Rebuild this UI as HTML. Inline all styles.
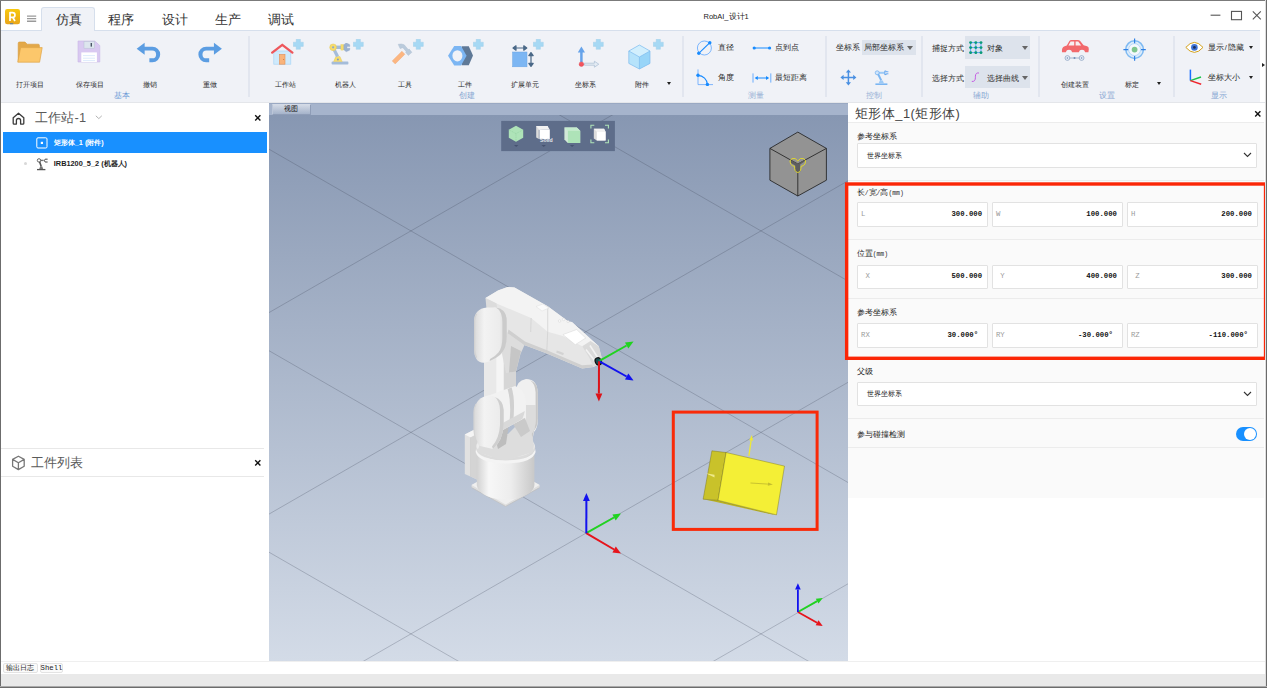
<!DOCTYPE html>
<html lang="zh">
<head>
<meta charset="utf-8">
<title>RobAI_设计1</title>
<style>
*{box-sizing:border-box;margin:0;padding:0}
html,body{width:1267px;height:688px;overflow:hidden;background:#fff}
body{position:relative;font-family:"Liberation Sans",sans-serif;font-size:7.4px;color:#222;line-height:1}
#win{position:absolute;left:0;top:0;width:1267px;height:688px;overflow:hidden;background:#fff}
#win>*{position:absolute}
.serif{font-family:"Liberation Sans",sans-serif}
.mono{font-family:"Liberation Mono",monospace}
/* window borders */
#bl{left:0;top:0;width:1px;height:688px;background:#6c6c6c}
#bt{left:0;top:0;width:1267px;height:1px;background:#7b7b7b}
#br{left:1265px;top:0;width:2px;height:688px;background:linear-gradient(90deg,#dedede 0,#dedede 50%,#6b6b6b 50%)}
#bb{left:0;top:686px;width:1267px;height:2px;background:linear-gradient(#aaa 0,#aaa 50%,#6c6c6c 50%)}
/* title bar */
#title{left:1px;top:1px;width:1264px;height:29px;z-index:3}
#title>*{position:absolute}
.tab{top:12px;height:14px;font-size:12.6px;line-height:14px;color:#333;white-space:nowrap;text-align:center;width:40px}
#tabact{left:41px;top:7px;width:54px;height:24px;z-index:2;background:#f0f2f7;border:1px solid #d6dfec;border-bottom:none;border-radius:3px 3px 0 0}
/* ribbon */
#ribbon{left:1px;top:30px;width:1259px;height:73px;background:#f0f2f7;z-index:1}
#ribbon>*{position:absolute}
.rl{top:49.8px;font-size:7px;height:9px;line-height:9px;width:60px;text-align:center;white-space:nowrap;color:#2a2a2a}
.gl{top:61.9px;height:8px;line-height:8px;width:40px;text-align:center;color:#6b9ad6;white-space:nowrap;font-size:7.5px}
.sep{top:6px;width:2px;height:61px;background:#e2e6ef;margin-left:-1px}
.sl{margin-top:.1px;font-size:7.5px;height:9px;line-height:9px;white-space:nowrap;color:#2a2a2a}
.combo{background:#dde3ec}
.dd{width:0;height:0;margin-top:-.6px;border-left:2.7px solid transparent;border-right:2.7px solid transparent;border-top:3.3px solid #222}
.ddg{width:0;height:0;border-left:3.5px solid transparent;border-right:3.5px solid transparent;border-top:4px solid #666}
/* left panel */
#left{left:1px;top:102px;width:268px;height:559px;background:#fff}
#left>*{position:absolute}
/* viewport */
#vp{left:269px;top:103px;width:579px;height:558px;background:#a6b4cd;overflow:hidden}
#vp>*{position:absolute}
/* right panel */
#right{left:848px;top:102px;width:417px;height:559px;background:#fff}
#right>*{position:absolute}
.lab{font-size:7.5px;height:9px;line-height:9px;white-space:nowrap;color:#222;left:8.7px}
.box{background:#fff;border:1px solid #e2e2e2;border-radius:1px}
.box>*{position:absolute}
.hl{left:0;width:416px;height:1px;background:#ececec}
.k{left:3.4px;top:6.6px;height:9px;line-height:9px;color:#999;font-family:"Liberation Mono",monospace;font-size:7.3px}
.v{right:4.6px;top:6.6px;height:9px;line-height:9px;color:#111;font-family:"Liberation Mono",monospace;font-weight:bold;font-size:7.3px;text-align:right}
/* bottom */
#bot{left:1px;top:661px;width:1264px;height:25px;background:#fff;border-top:1px solid #efefef}
#bot>*{position:absolute}
#status{left:0;top:12px;width:1264px;height:13px;background:#e9e9e9}
.btab{top:.8px;height:9.8px;line-height:8.6px;border:1px solid #e3e3e3;border-radius:2px;background:#fafafa;text-align:center;font-family:"Liberation Mono",monospace;font-size:7.3px;color:#222;white-space:nowrap}
</style>
</head>
<body>
<div id="win">
<div id="title">
<svg style="left:4px;top:8px" width="15" height="16" viewBox="0 0 15 16"><defs><linearGradient id="lg" x1="0" y1="0" x2="0" y2="1"><stop offset="0" stop-color="#f8c80e"/><stop offset="1" stop-color="#e8a51a"/></linearGradient></defs><rect x="0" y="0" width="15" height="15.2" rx="2.2" fill="url(#lg)"/><path d="M5 12V3.6h2.6a2.3 2.3 0 0 1 0 4.7H5M7.7 8.3L10 12" fill="none" stroke="#fff" stroke-width="1.7" stroke-linejoin="round"/><rect x="5" y="14.4" width="3.2" height=".8" fill="#2f6fd0"/></svg>
<svg style="left:26px;top:14px" width="10" height="8" viewBox="0 0 10 8"><path d="M0 1.1h9.2M0 3.6h9.2M0 6.3h9.2" stroke="#9a9a9a" stroke-width="1.4"/></svg>
<div class="tab serif" style="left:47.5px">仿真</div>
<div class="tab serif" style="left:100px">程序</div>
<div class="tab serif" style="left:154px">设计</div>
<div class="tab serif" style="left:206.5px">生产</div>
<div class="tab serif" style="left:260px">调试</div>
<div style="left:702.5px;top:11px;height:10px;line-height:10px;font-size:7.5px;color:#222;white-space:nowrap">RobAI_设计1</div>
<svg style="left:1207.9px;top:8.3px" width="56" height="14" viewBox="0 0 56 14"><path d="M1.6 6.2h9.8" stroke="#555" stroke-width="1.1"/><rect x="22.5" y="2.4" width="10" height="8.3" fill="none" stroke="#555" stroke-width="1.1"/><path d="M43.8 2.3l8 8M51.8 2.3l-8 8" stroke="#555" stroke-width="1.1"/></svg>
</div>
<div id="tabact"></div>
<div id="ribbon"><div style="left:0;top:0;width:1259px;height:1px;background:#d6dfec"></div><div style="left:0;top:72px;width:1264px;height:1px;background:#e4e6ea"></div>
<svg style="left:16px;top:11px" width="26" height="22" viewBox="0 0 26 22"><path d="M1.2 21V2.2q0-1.2 1.2-1.2h5.6l2.2 2.2h11q1.2 0 1.2 1.2V8" fill="#e3a848" stroke="#d79a3a" stroke-width=".6"/><path d="M3.6 6.6h21.6l-2.6 14.6H.8z" fill="#fcc76b" stroke="#e0a548" stroke-width=".7" stroke-linejoin="round"/></svg>
<svg style="left:76px;top:10.399999999999999px" width="24" height="23" viewBox="0 0 24 23"><path d="M1 1h16.8l5 4.6V22H1z" fill="#d9c9f1" stroke="#c9b7e6" stroke-width=".6"/><rect x="7" y="1.6" width="10.5" height="6.6" fill="#dde5ee" stroke="#b9c4d2" stroke-width=".5"/><rect x="13.6" y="3" width="1.4" height="3.6" fill="#4a5666"/><rect x="4.3" y="12.4" width="15.6" height="9.6" fill="#fff"/><path d="M6 15.6h12M6 18.2h12M6 20.6h12" stroke="#cfe2fa" stroke-width=".7"/></svg>
<svg style="left:135.4px;top:12.2px" width="27" height="21.6" viewBox="0 0 25 20"><path d="M0.6 6.2L8 .6v3.7h7.2a7 7 0 0 1 0 14.4H12.4v-3.6h2.6a3.6 3.6 0 0 0 0-7.2H8v3.9z" fill="#5b9de2"/></svg>
<svg style="left:195px;top:12px" width="27" height="21.6" viewBox="0 0 25 20"><g transform="translate(24.6 0) scale(-1 1)"><path d="M0.6 6.2L8 .6v3.7h7.2a7 7 0 0 1 0 14.4H12.4v-3.6h2.6a3.6 3.6 0 0 0 0-7.2H8v3.9z" fill="#5b9de2"/></g></svg>
<div class="rl" style="left:-1.0px;width:60px">打开项目</div>
<div class="rl" style="left:59.0px;width:60px">保存项目</div>
<div class="rl" style="left:119.0px;width:60px">撤销</div>
<div class="rl" style="left:179.0px;width:60px">重做</div>
<div class="gl" style="left:101.3px;color:#6b9ad6">基本</div>
<div class="sep" style="left:248px"></div>
<svg style="left:270px;top:12.5px" width="23" height="22" viewBox="0 0 23 22"><rect x="2.8" y="8" width="17" height="13.2" fill="#cfeafc" stroke="#a9d6f6" stroke-width=".7"/><rect x="8.4" y="11.4" width="5.6" height="9.8" fill="#f9b47c" stroke="#e28f56" stroke-width=".6"/><circle cx="12.6" cy="16.6" r=".5" fill="#c96e3a"/><path d="M1.2 9.6L11.3 1.8l10.1 7.8" fill="none" stroke="#ee575c" stroke-width="2.3" stroke-linecap="round" stroke-linejoin="round"/></svg>
<svg style="left:292.0px;top:8.600000000000001px" width="11" height="11" viewBox="0 0 11 11"><path d="M3.2.3h4.2v2.9h2.9v4.2H7.4v2.9H3.2V7.4H.3V3.2h2.9z" fill="#a6d9f4" stroke="#9acbe9" stroke-width=".4"/></svg>
<svg style="left:327.5px;top:12.5px" width="23" height="22" viewBox="0 0 23 22"><rect x="2.6" y="18.6" width="16.8" height="2.9" rx=".8" fill="#a4bcd9"/><path d="M4.6 18.6l2.2-5h4.2l2.2 5z" fill="#f6dc6c" stroke="#e3c650" stroke-width=".4"/><circle cx="8.9" cy="16.4" r="1" fill="#7f9cc4"/><path d="M8.6 13.4L5 6.4" stroke="#a4bcd9" stroke-width="3.2"/><path d="M6 4.3h6.6" stroke="#a4bcd9" stroke-width="3.4"/><rect x="11.9" y="1.5" width="2.9" height="5.6" fill="#f6dc6c" stroke="#e3c650" stroke-width=".3"/><circle cx="4.1" cy="4.3" r="3.4" fill="#f6dc6c" stroke="#e3c650" stroke-width=".4"/><circle cx="4.1" cy="4.3" r="1.1" fill="#8fa9cc"/><path d="M14.8 1.8l2.4-2 3.4 1.6.4 2h-3v1.800000000000002h3l-.4 2-3.4 1.6-2.400000000000002-2z" fill="#9ab1d0" stroke="#8aa2c4" stroke-width=".3"/></svg>
<svg style="left:352.0px;top:8.600000000000001px" width="11" height="11" viewBox="0 0 11 11"><path d="M3.2.3h4.2v2.9h2.9v4.2H7.4v2.9H3.2V7.4H.3V3.2h2.9z" fill="#a6d9f4" stroke="#9acbe9" stroke-width=".4"/></svg>
<svg style="left:389.5px;top:13px" width="24" height="22" viewBox="0 0 24 22"><path d="M1.2 17.9L10.9 8.2l3 3L4.2 20.900000000000002z" fill="#fcb681" stroke="#eca777" stroke-width=".4"/><path d="M7.2 1.3q3.4-.9 6 .5l4 4.7 1-.4 2.700000000000003 3.200000000000001-3.600000000000001 3.200000000000001-2.700000000000003-3.200000000000001.5-.9-3.2-3.700000000000001-2.8.9z" fill="#bacbdc" stroke="#a8bbd0" stroke-width=".4"/></svg>
<svg style="left:412.0px;top:8.799999999999997px" width="11" height="11" viewBox="0 0 11 11"><path d="M3.2.3h4.2v2.9h2.9v4.2H7.4v2.9H3.2V7.4H.3V3.2h2.9z" fill="#a6d9f4" stroke="#9acbe9" stroke-width=".4"/></svg>
<svg style="left:445.5px;top:15px" width="27" height="22" viewBox="0 0 27 22"><path d="M14.6 1.2h7.2l4.2 9.4-4.2 9.6h-7.2z" fill="#5f7997"/><path d="M7.2 1L1 10.8l6.2 9.8h6.8l5.6-9.8L14 1z" fill="#7cb6f3"/><ellipse cx="10.4" cy="10.8" rx="5" ry="5.6" fill="#f0f2f7"/></svg>
<svg style="left:472.0px;top:8.600000000000001px" width="11" height="11" viewBox="0 0 11 11"><path d="M3.2.3h4.2v2.9h2.9v4.2H7.4v2.9H3.2V7.4H.3V3.2h2.9z" fill="#a6d9f4" stroke="#9acbe9" stroke-width=".4"/></svg>
<svg style="left:510.5px;top:14.5px" width="23" height="23" viewBox="0 0 23 23"><rect x=".6" y="7" width="14.4" height="14.8" fill="#7cb6f3" stroke="#6aa4e4" stroke-width=".5"/><path d="M1.6 3h12.4M1 3l3-2.2v4.4zM14.8 3l-3-2.2v4.4z" stroke="#4b6988" stroke-width="1.2" fill="#4b6988" stroke-linejoin="round"/><path d="M19 8.6v11.6M19 7.6l-2.2 3h4.4zM19 21.4l-2.2-3h4.4z" stroke="#4b6988" stroke-width="1.2" fill="#4b6988" stroke-linejoin="round"/></svg>
<svg style="left:532.0px;top:8.600000000000001px" width="11" height="11" viewBox="0 0 11 11"><path d="M3.2.3h4.2v2.9h2.9v4.2H7.4v2.9H3.2V7.4H.3V3.2h2.9z" fill="#a6d9f4" stroke="#9acbe9" stroke-width=".4"/></svg>
<svg style="left:575.5px;top:15.5px" width="23" height="22" viewBox="0 0 23 22"><path d="M7.4 17.2h10v-2l4.4 3-4.4 3v-2h-10z" fill="#e4ecf4" stroke="#a9bdd2" stroke-width=".7" stroke-linejoin="round"/><path d="M4.4 16V6" stroke="#66a3ea" stroke-width="2.5"/><path d="M4.4 .6L.8 6.6h7.2z" fill="#66a3ea"/><circle cx="4.4" cy="18.2" r="2.3" fill="#f2545e" stroke="#d93c48" stroke-width=".4"/></svg>
<svg style="left:591.5px;top:8.600000000000001px" width="11" height="11" viewBox="0 0 11 11"><path d="M3.2.3h4.2v2.9h2.9v4.2H7.4v2.9H3.2V7.4H.3V3.2h2.9z" fill="#a6d9f4" stroke="#9acbe9" stroke-width=".4"/></svg>
<svg style="left:626.5px;top:14px" width="24" height="26" viewBox="0 0 24 26"><path d="M11.4 1L22 7v12.4L11.4 25 .8 19.4V7z" fill="#b6e3fb"/><path d="M11.4 1L22 7l-10.6 6L.8 7z" fill="#d2effd"/><path d="M22 7v12.4L11.4 25V13z" fill="#98d5f8"/><path d="M11.4 1L22 7v12.4L11.4 25 .8 19.4V7zM.8 7l10.6 6L22 7M11.4 13v12" fill="none" stroke="#7fbcee" stroke-width=".7" stroke-linejoin="round"/></svg>
<svg style="left:651.5px;top:8.600000000000001px" width="11" height="11" viewBox="0 0 11 11"><path d="M3.2.3h4.2v2.9h2.9v4.2H7.4v2.9H3.2V7.4H.3V3.2h2.9z" fill="#a6d9f4" stroke="#9acbe9" stroke-width=".4"/></svg>
<div class="rl" style="left:254.0px;width:60px">工作站</div>
<div class="rl" style="left:314.0px;width:60px">机器人</div>
<div class="rl" style="left:374.0px;width:60px">工具</div>
<div class="rl" style="left:434.0px;width:60px">工件</div>
<div class="rl" style="left:494.0px;width:60px">扩展单元</div>
<div class="rl" style="left:554.0px;width:60px">坐标系</div>
<div class="rl" style="left:610.7px;width:60px">附件</div>
<div class="gl" style="left:445.7px;color:#86a6d2">创建</div>
<div class="sep" style="left:682px"></div>
<div class="dd" style="left:666px;top:52.599999999999994px"></div>
<svg style="left:694px;top:9.5px" width="19" height="16" viewBox="0 0 19 16"><circle cx="9.4" cy="8" r="7" fill="none" stroke="#4a9cff" stroke-width=".7"/><path d="M4 13.2L14.6 2.8" stroke="#178bff" stroke-width="1.1"/><circle cx="3.8" cy="13.3" r="1.7" fill="#178bff"/><circle cx="14.8" cy="2.7" r="1.7" fill="#178bff"/></svg>
<svg style="left:694px;top:39px" width="19" height="17" viewBox="0 0 19 17"><path d="M3 .4v15.2h15" fill="none" stroke="#4a9cff" stroke-width=".7"/><path d="M3 6.4a9.4 9.4 0 0 1 9.4 9.2" fill="none" stroke="#178bff" stroke-width="1.1"/><circle cx="3" cy="6.3" r="1.7" fill="#178bff"/><circle cx="12.4" cy="15.4" r="1.7" fill="#178bff"/></svg>
<svg style="left:751px;top:14.5px" width="20" height="6" viewBox="0 0 20 6"><path d="M2 3h16" stroke="#178bff" stroke-width="1"/><circle cx="2.2" cy="3" r="1.6" fill="#178bff"/><circle cx="17.6" cy="3" r="1.6" fill="#178bff"/></svg>
<svg style="left:751px;top:42.5px" width="20" height="10" viewBox="0 0 20 10"><path d="M1 .4v9.2M18.8 .4v9.2" stroke="#4a9cff" stroke-width=".8"/><path d="M4 5h12" stroke="#178bff" stroke-width="1"/><path d="M2.6 5l3.2-2v4zM17.2 5l-3.2-2v4z" fill="#178bff"/></svg>
<div class="sl" style="left:717.3px;top:13.299999999999997px">直径</div>
<div class="sl" style="left:717.3px;top:43.3px">角度</div>
<div class="sl" style="left:774px;top:13.299999999999997px">点到点</div>
<div class="sl" style="left:774px;top:43.3px">最短距离</div>
<div class="gl" style="left:734.7px;color:#9ab3d6">测量</div>
<div class="sep" style="left:825px"></div>
<div class="sl" style="left:835.3px;top:13.299999999999997px">坐标系</div>
<div class="combo" style="left:860.8px;top:10.299999999999997px;width:54px;height:14.6px"></div>
<div class="sl" style="left:863px;top:13.299999999999997px">局部坐标系</div>
<div class="ddg" style="left:906px;top:16px"></div>
<svg style="left:838.5px;top:38.5px" width="17" height="17" viewBox="0 0 17 17"><path d="M8.4 2.4v12M2.4 8.4h12" stroke="#4a90e2" stroke-width="1.5"/><path d="M8.4 .4L5.8 3.6h5.2zM8.4 16.4l-2.6-3.2h5.2zM.4 8.4l3.2-2.6v5.2zM16.4 8.4l-3.2-2.6v5.2z" fill="#4a90e2"/></svg>
<svg style="left:872.5px;top:39.5px" width="15" height="16" viewBox="0 0 15 16"><path d="M1.4 14.2h12" stroke="#7bb6f2" stroke-width="1.6"/><path d="M4.6 13.4l1.2-3h3l1.2 3z" fill="#9dcaf6"/><path d="M7.2 10.4L3.6 3" stroke="#7bb6f2" stroke-width="2"/><path d="M3.4 2.8h7.4" stroke="#9dcaf6" stroke-width="2"/><circle cx="3.2" cy="2.8" r="2" fill="#cfe5fb" stroke="#5aa2ee" stroke-width=".6"/><path d="M10.6 1h1.6v.8h2.2M10.6 4.6h1.6v-.8h2.2M10.9 1v3.6" fill="none" stroke="#5aa2ee" stroke-width=".9"/></svg>
<div class="gl" style="left:853.4px;color:#9ab3d6">控制</div>
<div class="sep" style="left:921px"></div>
<div class="sl" style="left:931.4px;top:13.5px">捕捉方式</div>
<div class="sl" style="left:931.4px;top:43.5px">选择方式</div>
<div class="combo" style="left:964px;top:6.399999999999999px;width:65.2px;height:22.2px"></div>
<div class="combo" style="left:964px;top:35.900000000000006px;width:65.2px;height:22.4px"></div>
<svg style="left:967.7px;top:10.700000000000003px" width="14" height="13.4" viewBox="0 0 14 13.4"><path d="M1.6 1.6h10.4M1.6 6.6h10.4M1.6 11.6h10.4M1.6 1.6v10M6.8 1.6v10M12 1.6v10" stroke="#2b8cff" stroke-width=".7"/><circle cx="1.6" cy="1.6" r="1.45" fill="#0a9b78"/><circle cx="1.6" cy="6.6" r="1.45" fill="#0a9b78"/><circle cx="1.6" cy="11.6" r="1.45" fill="#0a9b78"/><circle cx="6.8" cy="1.6" r="1.45" fill="#0a9b78"/><circle cx="6.8" cy="6.6" r="1.45" fill="#0a9b78"/><circle cx="6.8" cy="11.6" r="1.45" fill="#0a9b78"/><circle cx="12" cy="1.6" r="1.45" fill="#0a9b78"/><circle cx="12" cy="6.6" r="1.45" fill="#0a9b78"/><circle cx="12" cy="11.6" r="1.45" fill="#0a9b78"/></svg>
<svg style="left:970px;top:42px" width="9" height="10.4" viewBox="0 0 9 10.4"><path d="M.8 9.4q3.4.6 3.6-3.6v-1.6Q4.6.4 8 1" fill="none" stroke="#c45ae2" stroke-width="1"/></svg>
<div class="sl" style="left:985.8px;top:13.5px">对象</div>
<div class="sl" style="left:985.8px;top:43.5px">选择曲线</div>
<div class="ddg" style="left:1020.8px;top:16px"></div>
<div class="ddg" style="left:1020.8px;top:46px"></div>
<div class="gl" style="left:959.7px;color:#86a6d2">辅助</div>
<div class="sep" style="left:1038px"></div>
<svg style="left:1059.5px;top:9.200000000000003px" width="29" height="23" viewBox="0 0 29 23"><path d="M1 13.2q-.6-5 2.6-6l2.2-.6L8.4 2q.6-1 2-1h6.4q1.4 0 2.4 1l3.4 4.2 3.6 1q2 .6 1.6 3.4l-.4 2.6h-3.2a3.3 3.3 0 0 0-6.4 0h-6.6a3.3 3.3 0 0 0-6.4 0z" fill="#f2696c"/><path d="M9.6 2.6h3.6v3.8H7.4zM14.6 2.6h2.6l3 3.8h-5.6z" fill="#f7f0f2"/><circle cx="6.4" cy="19" r="2.4" fill="#e8eef6" stroke="#8fa6c4" stroke-width=".8"/><circle cx="20.6" cy="19" r="2.4" fill="#e8eef6" stroke="#8fa6c4" stroke-width=".8"/><path d="M8.8 19h9.4" stroke="#8fa6c4" stroke-width=".8"/><circle cx="13.5" cy="19" r="1" fill="#6f8db6"/><circle cx="6.4" cy="19" r=".8" fill="#6f8db6"/><circle cx="20.6" cy="19" r=".8" fill="#6f8db6"/></svg>
<svg style="left:1122px;top:8px" width="23" height="23" viewBox="0 0 23 23"><circle cx="11.6" cy="11.6" r="8.8" fill="#dcecfb" stroke="#7fbaf2" stroke-width="1.5"/><circle cx="11.6" cy="11.6" r="6" fill="#f4f8fd" stroke="#a9d0f6" stroke-width=".8"/><circle cx="11.6" cy="11.6" r="2.9" fill="#7fc68f"/><path d="M11.6 .4v4.8M11.6 18v4.8M.4 11.6h4.8M18 11.6h4.8" stroke="#2f80e4" stroke-width="1.2"/></svg>
<div class="rl" style="left:1043.7px;width:60px">创建装置</div>
<div class="rl" style="left:1101.0px;width:60px">标定</div>
<div class="gl" style="left:1086.2px;color:#86a6d2">设置</div>
<div class="sep" style="left:1173px"></div>
<div class="dd" style="left:1156px;top:52.599999999999994px"></div>
<svg style="left:1184px;top:11px" width="19" height="13" viewBox="0 0 19 13"><path d="M.8 6.4Q9.4-3.6 18 6.4 9.4 16.400000000000002.8 6.4z" fill="#fff" stroke="#d2a11c" stroke-width="1"/><circle cx="9.4" cy="6.4" r="3.3" fill="#3f74d6"/><circle cx="9.4" cy="6.4" r="1.4" fill="#1c2f5c"/></svg>
<svg style="left:1186.5px;top:39px" width="15" height="17" viewBox="0 0 15 17"><path d="M2.4 11.6V.6" stroke="#1a6fff" stroke-width="1.5"/><path d="M2.4 11.6l10.6-3.6" stroke="#19c24a" stroke-width="1.5"/><path d="M2.4 11.6l10.8 3.6" stroke="#f0262f" stroke-width="1.5"/></svg>
<div class="sl" style="left:1207px;top:13.299999999999997px">显示<span style="padding:0 .8px">/</span>隐藏</div>
<div class="sl" style="left:1207px;top:43.3px">坐标大小</div>
<div class="gl" style="left:1198.2px;color:#86a6d2">显示</div>
<div class="dd" style="left:1248px;top:16.6px"></div>
<div class="dd" style="left:1248px;top:46.599999999999994px"></div></div>
<div style="left:1261.5px;top:63.2px;width:0;height:0;border-top:2.4px solid transparent;border-bottom:2.4px solid transparent;border-left:3px solid #222"></div>
<div id="left">
<svg style="left:11.4px;top:10px" width="13" height="13" viewBox="0 0 13 13"><path d="M1.2 5.8L6.5 1.2l5.3 4.6v5.4q0 .9-.9.9H8.6V8.4q0-1.9-2.1-1.9T4.4 8.4v3.7H2.1q-.9 0-.9-.9z" fill="none" stroke="#3a3a3a" stroke-width="1.3" stroke-linejoin="round"/></svg>
<div class="serif" style="left:33.6px;top:9px;height:14px;line-height:14px;font-size:12.8px;color:#5a5a5a;white-space:nowrap;letter-spacing:.3px">工作站-1</div>
<svg style="left:93.5px;top:13.4px" width="8" height="5" viewBox="0 0 8 5"><path d="M.8.8l3 2.8 3-2.8" fill="none" stroke="#aaa" stroke-width=".9"/></svg>
<svg style="left:253.2px;top:12.4px" width="8" height="8" viewBox="0 0 8 8"><path d="M1.2 1.2l5.2 5.2M6.4 1.2L1.2 6.4" stroke="#111" stroke-width="1.4"/></svg>
<div style="left:2px;top:30.4px;width:263.6px;height:20.6px;background:#1890ff"></div>
<svg style="left:35.4px;top:35.2px" width="12" height="12" viewBox="0 0 12 12"><rect x=".8" y=".8" width="10.2" height="10.2" rx="1.2" fill="none" stroke="#fff" stroke-width="1"/><rect x="4.8" y="4.8" width="2.2" height="2.2" fill="#fff"/></svg>
<div style="left:52.8px;top:36.4px;height:10px;line-height:10px;font-size:7.3px;font-weight:bold;color:#fff;white-space:nowrap">矩形体_1 (附件)</div>
<div style="left:23px;top:60.4px;width:3px;height:3px;border-radius:2px;background:#d8d8d8"></div>
<svg style="left:35.4px;top:56.2px" width="13" height="13" viewBox="0 0 13 13"><path d="M1 11.6h8.4" stroke="#555" stroke-width="1.3"/><path d="M3.2 11l.9-2.6h2.2l.9 2.6z" fill="#777"/><path d="M5.2 8.6L3.2 2.6" stroke="#555" stroke-width="1.6"/><path d="M3 2.4h4.6" stroke="#777" stroke-width="1.4"/><circle cx="3" cy="2.4" r="1.7" fill="#fff" stroke="#444" stroke-width=".8"/><path d="M11.6 1.2Q8.400000000000002.4 8.4 2.6T11.6 4" fill="none" stroke="#444" stroke-width="1"/></svg>
<div style="left:52.8px;top:57.4px;height:10px;line-height:10px;font-size:7.35px;font-weight:bold;color:#1c1c1c;white-space:nowrap">IRB1200_5_2 (机器人)</div>
<div style="left:0;top:346px;width:263px;height:1px;background:#e8e8e8"></div>
<div style="left:0;top:374px;width:263px;height:1px;background:#e8e8e8"></div>
<svg style="left:10px;top:353.4px" width="15" height="16" viewBox="0 0 15 16"><path d="M7.4 1.2l5.8 3.2v6.8l-5.8 3.4-5.8-3.4V4.400000000000002zM1.6 4.4l5.8 3.3 5.8-3.3M7.4 7.700000000000002v6.9" fill="none" stroke="#777" stroke-width="1.3" stroke-linejoin="round"/></svg>
<div class="serif" style="left:29.8px;top:354px;height:14px;line-height:14px;font-size:12.8px;color:#5a5a5a;white-space:nowrap">工件列表</div>
<svg style="left:253.2px;top:357px" width="8" height="8" viewBox="0 0 8 8"><path d="M1.2 1.2l5.2 5.2M6.4 1.2L1.2 6.4" stroke="#111" stroke-width="1.4"/></svg>
</div>
<div id="vp"><svg style="left:0;top:0" width="579" height="558" viewBox="269 103 579 558"><defs>
<linearGradient id="bg" x1="0" y1="115" x2="0" y2="661" gradientUnits="userSpaceOnUse"><stop offset="0" stop-color="#8797b2"/><stop offset="1" stop-color="#d3dbe7"/></linearGradient>
<linearGradient id="cyl" x1="476" y1="0" x2="534" y2="0" gradientUnits="userSpaceOnUse"><stop offset="0" stop-color="#cfcfcf"/><stop offset=".22" stop-color="#f7f7f7"/><stop offset=".6" stop-color="#ededed"/><stop offset="1" stop-color="#c9c9c9"/></linearGradient>
<linearGradient id="cap" x1="474" y1="0" x2="508" y2="0" gradientUnits="userSpaceOnUse"><stop offset="0" stop-color="#d9d9d9"/><stop offset=".3" stop-color="#f3f3f3"/><stop offset=".75" stop-color="#ececec"/><stop offset="1" stop-color="#d2d2d2"/></linearGradient>
<linearGradient id="larm" x1="483" y1="0" x2="516" y2="0" gradientUnits="userSpaceOnUse"><stop offset="0" stop-color="#dedede"/><stop offset=".4" stop-color="#f0f0f0"/><stop offset=".62" stop-color="#e4e4e4"/><stop offset="1" stop-color="#cccccc"/></linearGradient>
<clipPath id="vpc"><rect x="269" y="115" width="579" height="546"/></clipPath>
</defs>
<rect x="269" y="103" width="579" height="12" fill="#a6b4cc"/><rect x="269" y="103" width="579" height="1" fill="#9aa9c3"/>
<rect x="269" y="115" width="579" height="546" fill="url(#bg)"/>
<path d="M269 -52.3L848 281.0M269 149.2L848 482.5M269 350.7L848 684.0M269 552.2L848 885.5M269 312.6L848 -20.7M269 514.1L848 180.8M269 715.6L848 382.3M269 917.1L848 583.8" stroke="#3f4858" stroke-opacity=".36" stroke-width=".75" fill="none" clip-path="url(#vpc)"/>
<rect x="501.2" y="120.9" width="113.7" height="30.2" fill="#5e6d8a"/>
<path d="M516 125.8l7.2 4v8l-7.2 4-7.2-4v-8z" fill="#aee3b8"/><path d="M508.8 129.8l7.2 3.8 7.2-3.8M516 133.600000000000002v8" stroke="#8fcf9e" stroke-width=".6" stroke-dasharray="1 .8" fill="none"/><path d="M514.0 144.9h4.4l-2.2 2z" fill="#465370"/>
<path d="M536.2 126h11.6v1.600000000000002l-9 2.4v9l-2.6-1.4z" fill="#dcdcdc"/><path d="M536.2 126h11.4l2.2 3.7h-10.4z" fill="#f2f2f2"/><rect x="539.4" y="129.7" width="10.4" height="9.4" fill="#fff"/><path d="M541.5 144.9h4.4l-2.2 2z" fill="#465370"/>
<text x="540" y="142" font-family="Liberation Sans, sans-serif" font-size="5.2" font-weight="bold" fill="#e6e9ee">Solid</text>
<path d="M564.4 127.4h12.4l3.4 3.4v12.2h-12.400000000000002l-3.4-3.4z" fill="#d2e9d8"/><path d="M564.4 127.4h12.4l3.4 3.4h-12.4z" fill="#c4ecce"/><rect x="567.9" y="130.8" width="12.3" height="12.2" fill="#aee3b8"/><path d="M569.9 144.9h4.4l-2.2 2z" fill="#465370"/>
<path d="M593.8 128.7h10.4l1.4 3v8.800000000000001h-8.8l-3-2z" fill="#dcdcdc"/><path d="M593.8 128.7h10.2l1.6 3h-8.8z" fill="#f2f2f2"/><rect x="596.8" y="131.7" width="8.8" height="8.8" fill="#fff"/>
<path d="M590.9 128.6v-3.400000000000002h3.4M605 125.2h3.4v3.4M608.4 139.6v3.2h-3.4M594.3 142.8h-3.4v-3.2" fill="none" stroke="#aee3b8" stroke-width="1.1"/>
<path d="M797.8 132.1l28.6 16.3v31.8l-28.6 15.8-27.9-15.8v-31.8z" fill="#939393" stroke="#1a1a1a" stroke-width=".8" stroke-linejoin="round"/><path d="M769.9 148.4l27.9 15.6 28.6-15.6M797.8 164v32" fill="none" stroke="#1a1a1a" stroke-width=".8"/>
<path d="M791.4 160.2l6.3 3.6 6-3.4.9 1.2-4.4 2.800000000000001v7.4l-2.4.8-2.6-1.400000000000002v-5.800000000000001l-4.6-2.6z" fill="#5e5e5e"/><path d="M797.8 161q-2.200000000000003-3.600000000000001-6-2.400000000000002-3 2-1.200000000000003 5.4 1.800000000000001 2.200000000000003 4 2.400000000000002-.4 5.2 3.200000000000003 6.2 3.6-1 3.200000000000003-6.2 2.200000000000003-.2 4-2.400000000000002 1.800000000000001-3.4-1.200000000000003-5.4-3.8-1.200000000000001-6 2.400000000000002z" fill="none" stroke="#e8de22" stroke-width=".9"/>
<!--ROBOT_START--><path d="M471.6 485l34-19 34 19v2.6l-34 18.8-34-18.8z" fill="#dedede"/><path d="M471.6 485l34-19 34 19-34 19.4z" fill="#efefef"/><path d="M471.6 487.6l34 18.8 34-18.8" fill="none" stroke="#bdbdbd" stroke-width=".7"/><path d="M464.8 434.6l9.8-5.2 6 2.6v47l-2.4 1-13.4-6z" fill="#e1e1e1"/><path d="M464.8 434.6l9.8-5.2 6 2.6-10 5.4z" fill="#f5f5f5"/><path d="M470.6 437.4v39.4" stroke="#c9c9c9" stroke-width=".8"/><path d="M470.6 437.4l10-5.4v47l-2.4 1-7.6-3.400000000000002z" fill="#d4d4d4"/><path d="M476.8 446v39.6a28.8 15 0 0 0 57.6-2.2V446z" fill="url(#cyl)"/><ellipse cx="505.6" cy="448" rx="29.6" ry="12.6" fill="#dcdcdc"/><ellipse cx="505.6" cy="446" rx="29.2" ry="12" fill="#ececec"/><path d="M516 392q0-11.5 10-13 11.8 0 11.8 15v26q0 8-3.800000000000001 12l-2.6 12-15.4 6z" fill="#f0f0f0"/><path d="M526 405h9.6v15q0 8-3 12l-2.6 11-4 2z" fill="#dcdcdc"/><path d="M530 380.2q5 3 5.6 12v28q0 8-3.6 13l-2 10 1.4-.6 2.6-12q3.800000000000001-4 3.800000000000001-12v-26q0-10-7.800000000000001-12.4z" fill="#c8c8c8"/><path d="M484 348h32v44l-14 9-18-3z" fill="#e9e9e9"/><path d="M503.6 350h12.4v42l-12.4 8z" fill="#d6d6d6"/><path d="M496.3 350h7.3v48h-7.3z" fill="#f5f5f5"/><path d="M480 444l13 4 10-9 21-21 7 14 3 13-1 7-28 9-28-9z" fill="#dddddd"/><path d="M493 431l16-7-3 20-8 5z" fill="#bdbdbd"/><path d="M513 424l12-6 5 13-9 6z" fill="#cacaca"/><path d="M486 396.6l29-10.6q9 3 10.4 13 1 11-3 20l-30 17z" fill="#f2f2f2"/><path d="M507.6 389l4-1.4q4 12 1.400000000000002 36l-4 2.2q3-22-1.4-36.8z" fill="#d0d0d0"/><path d="M492.4 436l30-17q1.600000000000002-4 2.4-8l-33 18z" fill="#d9d9d9"/><path d="M489 395.6q-13 1.4-15 15.4v19q1 12 6 16l13 3q10-9 10.6-24v-15q-.6-13-14.6-14.4z" fill="url(#cap)"/><path d="M503.6 410q-.6-10-8.6-13 4.6 4 5 13v15q-.6 13-8 21.6l1 2.400000000000002q10-9 10.6-24z" fill="#cfcfcf"/><path d="M476 404q-2 4-2 8v18q.6 8 3 12" fill="none" stroke="#d4d4d4" stroke-width="1.2"/><path d="M476 449q3 11 29.6 11.6 26.6-.6 29.6-11.6l.4 3q-3 11-30 11.6-27-.6-30-11.6z" fill="#f4f4f4"/><path d="M505 330l19.5 15-4 9-4.5 17.5-10 1.5-4.6-22z" fill="#dddddd"/><path d="M511 346l10 5-5 20.5-7 1z" fill="#c6c6c6"/><path d="M485.5 298.0L498.0 290.4L507.6 286.9L514.5 287.6L547.7 306.3L568.4 321.4L571.9 322.1L598.8 346.3L601.6 357.4L598.8 364.3L593.3 367.0L582.2 368.4L546.3 353.2L524.2 344.9L507.6 333.2L500.0 320.0z" fill="#e6e6e6"/><path d="M507.6 333.2L524.2 344.9L546.3 353.2L582.2 368.4L593.3 367.0L592.5 364.5L582.0 365.2L547.0 350.2L525.0 341.6L508.5 329.6z" fill="#cfcfcf"/><path d="M485.5 298.0L498.0 290.4L507.6 286.9L514.5 287.6L547.7 306.3L568.4 321.4L571.9 322.1L598.8 346.3L590.5 356.0L582.2 346.3L562.9 336.0L547.7 331.8L531.1 318.0L496.6 303.5z" fill="#f3f3f3"/><path d="M485.5 298.0L496.6 303.5L497.4 314.0L486.4 308.0z" fill="#dcdcdc"/><path d="M547.7 306.3v25.5l-1 21.4M531.1 318l-.4 14" fill="none" stroke="#cfcfcf" stroke-width=".7"/><path d="M536.0 306.5L543.0 304.0L549.0 308.0L542.0 311.0z" fill="#fbfbfb" stroke="#d9d9d9" stroke-width=".4"/><circle cx="559.6" cy="321" r="1.3" fill="#fafafa" stroke="#cfcfcf" stroke-width=".4"/><circle cx="563.6" cy="319.4" r="1.3" fill="#fafafa" stroke="#cfcfcf" stroke-width=".4"/><circle cx="568" cy="321.6" r="1.1" fill="#fafafa" stroke="#cfcfcf" stroke-width=".4"/><path d="M562.9 334.6L576.7 329.5L585.7 338.0L575.3 344.7z" fill="#ffffff" stroke="#d5d5d5" stroke-width=".5"/><path d="M582.2 346.3L590.5 341.0L598.8 346.3L601.6 357.4L598.8 364.3L593.3 367.0L589.5 358.0z" fill="#dadada"/><path d="M586 349.5l8.5 11M590 345.5l8 12.5" stroke="#f2f2f2" stroke-width="1.6"/><ellipse cx="598.3" cy="361.4" rx="3" ry="3.7" fill="#1d4a52" stroke="#0a0a0a" stroke-width="1.2" transform="rotate(-25 598.3 361.4)"/><path d="M556.5 351.5l7 2.600000000000002" stroke="#d3d3d3" stroke-width="2.2"/><path d="M487 307.4q-6.400000000000001.4-10 4.600000000000001-3 3.600000000000001-3 9v28q0 6 2.4 10 3 4.4 8.6 3.6l6-1.6q11-5 14-13 1.600000000000002-5 1.6-11v-16.400000000000002q0-6-3.2-9.600000000000001-4-4-10.4-3.600000000000001z" fill="url(#cap)"/><path d="M506.6 320.6q0-6-3.2-9.6-3-3-7.4-3.4 3.6 2 5 6 1.400000000000002 4 1.4 9v15q0 10-4 15-3 4-8.4 6.4l-.4 2 1.4-.4q11-5 14-13 1.600000000000002-5 1.6-11z" fill="#cbcbcb"/><path d="M476.6 314q-2 3-2 7v28q0 5 2 8.6" fill="none" stroke="#d2d2d2" stroke-width="1.2"/><!--ROBOT_END-->
<path d="M599.0 361.2L626.6 345.5" stroke="#20d320" stroke-width="2.0"/><path d="M633.6 341.5L628.3 348.4L625.0 342.5z" fill="#20d320"/><path d="M599.0 361.2L626.6 376.5" stroke="#1212ee" stroke-width="2.0"/><path d="M633.6 380.4L625.0 379.5L628.3 373.5z" fill="#1212ee"/><path d="M599.0 361.2L598.9 393.5" stroke="#dc1219" stroke-width="2.0"/><path d="M598.9 401.5L595.5 393.5L602.3 393.5z" fill="#dc1219"/>
<path d="M586.2 533.2L614.0 517.5" stroke="#20d320" stroke-width="2.0"/><path d="M621.0 513.6L615.7 520.5L612.4 514.6z" fill="#20d320"/><path d="M586.2 533.2L614.1 549.5" stroke="#e6141c" stroke-width="2.0"/><path d="M621.0 553.5L612.4 552.4L615.8 546.5z" fill="#e6141c"/><path d="M586.3 533.2L586.4 501.0" stroke="#1212ee" stroke-width="2.0"/><path d="M586.4 493.0L589.8 501.0L583.0 501.0z" fill="#1212ee"/>
<path d="M797.9 612.0L817.1 601.1" stroke="#20d320" stroke-width="1.8"/><path d="M822.7 598.0L818.5 603.6L815.8 598.7z" fill="#20d320"/><path d="M797.9 612.0L817.1 622.8" stroke="#e6141c" stroke-width="1.8"/><path d="M822.7 625.9L815.7 625.2L818.5 620.3z" fill="#e6141c"/><path d="M797.9 612.0L797.9 589.6" stroke="#1212ee" stroke-width="1.8"/><path d="M797.9 583.2L800.7 589.6L795.1 589.6z" fill="#1212ee"/>
<path d="M703.1 499.2l14.9 1.1 58.5 14.6-5.5-.6-58-13z" fill="#b9b022"/><path d="M711.9 450.8l14.2 1.7-8.1 47.8-14.9-1.1z" fill="#c9c22a" stroke="#6f6a12" stroke-width=".4"/><path d="M726.1 452.5l58.4 13.6-8 48.8-58.5-14.6z" fill="#f4ef36" stroke="#6f6a12" stroke-width=".4"/><path d="M748.9 455.9L751.1 440.4" stroke="#efe934" stroke-width="1.3"/><path d="M751.9 435.0L753.0 440.7L749.2 440.2z" fill="#efe934"/><path d="M750.5 483.0L767.9 484.1" stroke="#c4bd2e" stroke-width="0.9"/><path d="M772.9 484.4L767.8 485.8L768.0 482.4z" fill="#c4bd2e"/><path d="M705.8 473.2l8.700000000000001 1.6v2.6z" fill="#efe988"/>
<rect x="673.3" y="412.1" width="143.8" height="117.3" fill="none" stroke="#f92a08" stroke-width="3"/></svg>
<div style="left:3px;top:1.3px;width:38.6px;height:10.6px;background:linear-gradient(#d2d9e5,#a5b3ca);border:1px solid #8f9db7;border-top-color:#d3dae6;border-left-color:#bcc6d8;font-size:7.2px;line-height:8.6px;text-align:center;color:#111;font-family:'Liberation Mono',monospace">视图</div></div>
<div id="right">
<div style="left:0;top:20px;width:416px;height:376px;background:#fafafa"></div>
<div class="serif" style="left:7px;top:4.6px;height:14px;line-height:14px;font-size:12.8px;color:#444;white-space:nowrap;letter-spacing:.45px">矩形体_1(矩形体)</div>
<svg style="left:406.2px;top:8.2px" width="8" height="8" viewBox="0 0 8 8"><path d="M1.2 1.2l5.2 5.2M6.4 1.2L1.2 6.4" stroke="#111" stroke-width="1.4"/></svg>
<div class="hl" style="top:20px"></div>
<div class="lab" style="top:30.4px">参考坐标系</div>
<div class="box" style="left:8.7px;top:41.3px;width:400.6px;height:24.6px"><div style="left:9.2px;top:6.8px;height:9px;line-height:9px;white-space:nowrap">世界坐标系</div><svg style="right:4.6px;top:8.2px" width="9" height="6" viewBox="0 0 9 6"><path d="M1 1l3.5 3.4L8 1" fill="none" stroke="#333" stroke-width="1.1"/></svg></div>
<div class="hl" style="top:78px"></div>
<div class="lab" style="top:86.4px">长<span class="mono" style="font-size:6.4px">/</span>宽<span class="mono" style="font-size:6.4px">/</span>高<span class="mono" style="font-size:6.4px">(mm)</span></div>
<div class="box" style="left:8.7px;top:100.2px;width:131px;height:24.6px"><div class="k">L</div><div class="v">300.000</div></div>
<div class="box" style="left:143.6px;top:100.2px;width:131px;height:24.6px"><div class="k">W</div><div class="v">100.000</div></div>
<div class="box" style="left:278.6px;top:100.2px;width:131px;height:24.6px"><div class="k">H</div><div class="v">200.000</div></div>
<div class="hl" style="top:137px"></div>
<div class="lab" style="top:147px">位置<span class="mono" style="font-size:6.4px">(mm)</span></div>
<div class="box" style="left:8.7px;top:162.6px;width:131px;height:24.9px"><div class="k">&nbsp;X</div><div class="v">500.000</div></div>
<div class="box" style="left:143.6px;top:162.6px;width:131px;height:24.9px"><div class="k">&nbsp;Y</div><div class="v">400.000</div></div>
<div class="box" style="left:278.6px;top:162.6px;width:131px;height:24.9px"><div class="k">&nbsp;Z</div><div class="v">300.000</div></div>
<div class="hl" style="top:195.6px"></div>
<div class="lab" style="top:206.2px">参考坐标系</div>
<div class="box" style="left:8.7px;top:221.2px;width:131px;height:24.4px"><div class="k">RX</div><div class="v" style="right:8.6px">30.000°</div></div>
<div class="box" style="left:143.6px;top:221.2px;width:131px;height:24.4px"><div class="k">RY</div><div class="v" style="right:8.6px">-30.000°</div></div>
<div class="box" style="left:278.6px;top:221.2px;width:131px;height:24.4px"><div class="k">RZ</div><div class="v" style="right:8.6px">-110.000°</div></div>
<div class="lab" style="top:264.6px">父级</div>
<div class="box" style="left:8.7px;top:279.6px;width:400.6px;height:24.4px"><div style="left:9.2px;top:6.8px;height:9px;line-height:9px;white-space:nowrap">世界坐标系</div><svg style="right:4.6px;top:8.2px" width="9" height="6" viewBox="0 0 9 6"><path d="M1 1l3.5 3.4L8 1" fill="none" stroke="#333" stroke-width="1.1"/></svg></div>
<div class="hl" style="top:316px"></div>
<div class="lab" style="top:328px">参与碰撞检测</div>
<div style="left:387.6px;top:325.2px;width:21.4px;height:14px;border-radius:7px;background:#1890ff"></div>
<div style="left:396.2px;top:326.4px;width:11.6px;height:11.6px;border-radius:6px;background:#fff"></div>
<div class="hl" style="top:345px"></div>
</div>
<svg style="left:843px;top:180px" width="424" height="182" viewBox="843 180 424 182"><rect x="846.65" y="184" width="418.9" height="174.3" fill="none" stroke="#fb2606" stroke-width="3.4"/></svg>
<div id="bot">
<div class="btab" style="left:1.6px;width:35px">输出日志</div>
<div class="btab" style="left:38.6px;width:23.6px">Shell</div>
<div id="status"></div>
</div>
<div id="bl"></div><div id="bt"></div><div id="br"></div><div id="bb"></div>
</div>
</body>
</html>
